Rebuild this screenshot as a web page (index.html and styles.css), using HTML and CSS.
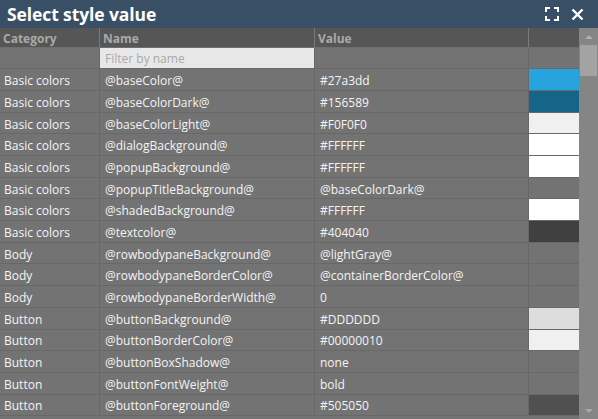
FILE: index.html
```html
<!DOCTYPE html>
<html>
<head>
<meta charset="utf-8">
<link rel="stylesheet" href="styles.css">
</head>
<body>
<div class="dialog">
  <div class="titlebar">
    <span class="title">Select style value</span>
    <div class="tools">
      <svg class="icon" width="14" height="14" viewBox="0 0 14 14"><path d="M1 5V1h4M9 1h4v4M13 9v4H9M5 13H1V9" fill="none" stroke="#fff" stroke-width="2"/></svg>
      <svg class="icon" width="13" height="13" viewBox="0 0 13 13"><path d="M1.5 1.5l10 10M11.5 1.5l-10 10" fill="none" stroke="#fff" stroke-width="2.4"/></svg>
    </div>
  </div>
  <div class="content">
    <div class="grid">
      <div class="row head">
        <div class="cell">Category</div>
        <div class="cell">Name</div>
        <div class="cell">Value</div>
        <div class="cell sw"></div>
      </div>
      <div class="row filter">
        <div class="cell"></div>
        <div class="cell fcell"><input class="finput" placeholder="Filter by name"></div>
        <div class="cell"></div>
        <div class="cell sw"></div>
      </div>
      <div class="row"><div class="cell">Basic colors</div><div class="cell">@baseColor@</div><div class="cell">#27a3dd</div><div class="cell sw"><div class="swatch" style="background:#27a3dd"></div></div></div>
      <div class="row"><div class="cell">Basic colors</div><div class="cell">@baseColorDark@</div><div class="cell">#156589</div><div class="cell sw"><div class="swatch" style="background:#156589"></div></div></div>
      <div class="row"><div class="cell">Basic colors</div><div class="cell">@baseColorLight@</div><div class="cell">#F0F0F0</div><div class="cell sw"><div class="swatch" style="background:#F0F0F0"></div></div></div>
      <div class="row"><div class="cell">Basic colors</div><div class="cell">@dialogBackground@</div><div class="cell">#FFFFFF</div><div class="cell sw"><div class="swatch" style="background:#FFFFFF"></div></div></div>
      <div class="row"><div class="cell">Basic colors</div><div class="cell">@popupBackground@</div><div class="cell">#FFFFFF</div><div class="cell sw"><div class="swatch" style="background:#FFFFFF"></div></div></div>
      <div class="row"><div class="cell">Basic colors</div><div class="cell">@popupTitleBackground@</div><div class="cell">@baseColorDark@</div><div class="cell sw"></div></div>
      <div class="row"><div class="cell">Basic colors</div><div class="cell">@shadedBackground@</div><div class="cell">#FFFFFF</div><div class="cell sw"><div class="swatch" style="background:#FFFFFF"></div></div></div>
      <div class="row"><div class="cell">Basic colors</div><div class="cell">@textcolor@</div><div class="cell">#404040</div><div class="cell sw"><div class="swatch" style="background:#404040"></div></div></div>
      <div class="row"><div class="cell">Body</div><div class="cell">@rowbodypaneBackground@</div><div class="cell">@lightGray@</div><div class="cell sw"></div></div>
      <div class="row"><div class="cell">Body</div><div class="cell">@rowbodypaneBorderColor@</div><div class="cell">@containerBorderColor@</div><div class="cell sw"></div></div>
      <div class="row"><div class="cell">Body</div><div class="cell">@rowbodypaneBorderWidth@</div><div class="cell">0</div><div class="cell sw"></div></div>
      <div class="row"><div class="cell">Button</div><div class="cell">@buttonBackground@</div><div class="cell">#DDDDDD</div><div class="cell sw"><div class="swatch" style="background:#DDDDDD"></div></div></div>
      <div class="row"><div class="cell">Button</div><div class="cell">@buttonBorderColor@</div><div class="cell">#00000010</div><div class="cell sw"><div class="swatch" style="background:#F0F0F0"></div></div></div>
      <div class="row"><div class="cell">Button</div><div class="cell">@buttonBoxShadow@</div><div class="cell">none</div><div class="cell sw"></div></div>
      <div class="row"><div class="cell">Button</div><div class="cell">@buttonFontWeight@</div><div class="cell">bold</div><div class="cell sw"></div></div>
      <div class="row"><div class="cell">Button</div><div class="cell">@buttonForeground@</div><div class="cell">#505050</div><div class="cell sw"><div class="swatch" style="background:#505050"></div></div></div>
    </div>
    <div class="scrollbar">
      <div class="arrow up"></div>
      <div class="track"><div class="thumb"></div></div>
      <div class="arrow down"></div>
    </div>
  </div>
</div>
</body>
</html>
```

FILE: styles.css
```css
html, body {
  margin: 0;
  padding: 0;
  background: #737373;
  overflow: hidden;
}
.dialog {
  width: 598px;
  height: 419px;
  display: flex;
  flex-direction: column;
  font-family: "Open Sans", "Noto Sans", sans-serif;
  font-size: 12px;
  color: #f4f4f4;
}
.titlebar {
  height: 28px;
  flex: none;
  background: #394f66;
  display: flex;
  align-items: center;
  justify-content: space-between;
  padding: 0 14px 0 7px;
}
.title {
  font-size: 17.5px;
  font-weight: 700;
  color: #fff;
  letter-spacing: -0.1px;
}
.tools {
  display: flex;
  align-items: center;
  gap: 12px;
}
.icon { display: block; }
.content {
  flex: 1;
  display: flex;
  min-height: 0;
  overflow: hidden;
}
.grid {
  width: 579px;
  flex: none;
}
.row {
  display: grid;
  grid-template-columns: 100px 215px 214px 50px;
  height: 21.7px;
  box-sizing: border-box;
  border-bottom: 1px solid #686868;
  background: #737373;
}
.cell {
  border-right: 1px solid #686868;
  padding: 2px 4px 0;
  display: flex;
  align-items: center;
  white-space: nowrap;
  overflow: hidden;
  box-sizing: border-box;
}
.cell:nth-child(2), .cell:nth-child(3) { padding-left: 5px; }
.cell.sw { border-right: none; padding: 0; align-items: stretch; }
.swatch { flex: 1; }
.row.head {
  height: 20.3px;
  background: #565656;
  border-bottom: 1px solid #6e6e6e;
}
.row.head .cell {
  font-weight: 700;
  color: #a9a9a9;
  border-right: 1px solid #7a7a7a;
  padding-left: 3px;
  padding-top: 1px;
}
.row.head .cell.sw { border-right: none; }
.row.filter { height: 21px; }
.cell.fcell { padding: 0; align-items: stretch; }
.finput {
  flex: 1;
  border: none;
  margin: 0;
  padding: 1px 5px 0;
  background: #e8e8e8;
  font-family: inherit;
  font-size: 12px;
  outline: none;
}
.finput::placeholder { color: #a8a8a8; }
.scrollbar {
  width: 19px;
  flex: none;
  background: #858585;
  display: flex;
  flex-direction: column;
}
.arrow {
  height: 17px;
  flex: none;
  display: flex;
  align-items: center;
  justify-content: center;
}
.arrow::before {
  content: "";
  border-left: 4px solid transparent;
  border-right: 4px solid transparent;
}
.arrow.up::before { border-bottom: 4px solid #b0b0b0; }
.arrow.down::before { border-top: 4px solid #a8a8a8; }
.track { flex: 1; }
.thumb {
  height: 31px;
  margin: 0 1px 0 1px;
  background: #a3a3a3;
}
```
